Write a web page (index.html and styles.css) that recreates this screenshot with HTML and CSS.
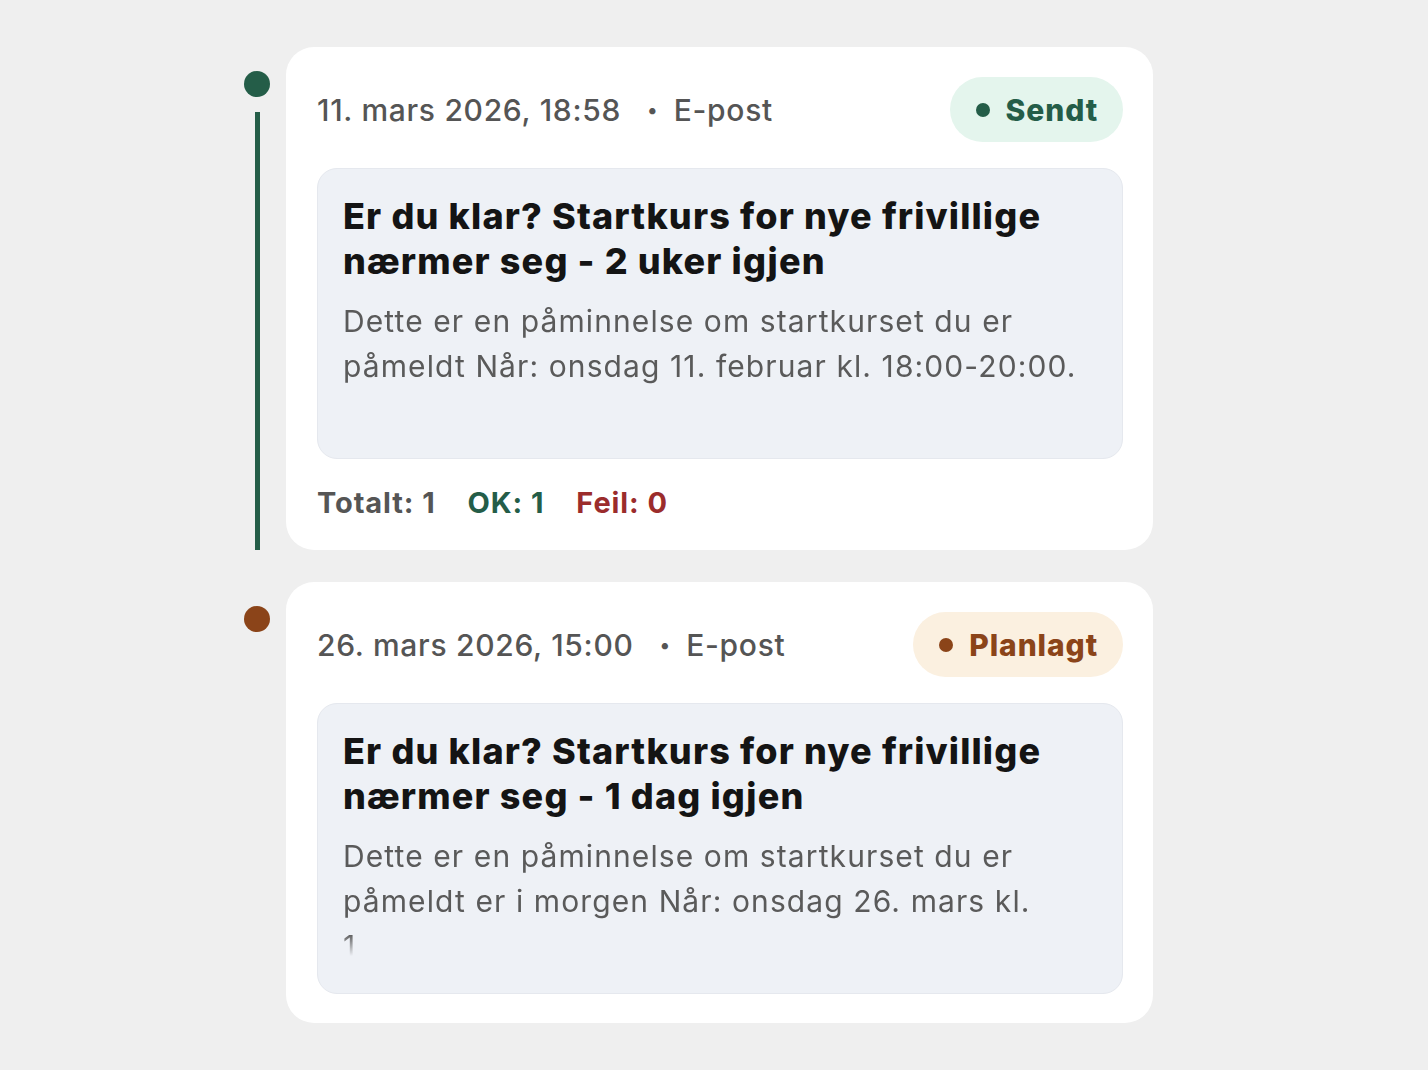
FILE: index.html
```html
<!DOCTYPE html>
<html lang="no">
<head>
<meta charset="utf-8">
<title>Utsendelser</title>
<link rel="stylesheet" href="styles.css">
</head>
<body>
<div class="timeline">
  <div class="item">
    <div class="rail">
      <span class="dot dot-sent"></span>
      <span class="line"></span>
    </div>
    <div class="card">
      <div class="card-head">
        <div class="meta">
          <span>11. mars 2026, 18:58</span>
          <span class="sep">•</span>
          <span>E-post</span>
        </div>
        <span class="badge badge-sent"><span class="badge-dot"></span>Sendt</span>
      </div>
      <div class="message">
        <h2 class="title">Er du klar? Startkurs for nye frivillige nærmer seg - 2 uker igjen</h2>
        <p class="body">Dette er en påminnelse om startkurset du er påmeldt Når: onsdag 11. februar kl. 18:00-20:00.</p>
      </div>
      <div class="stats">
        <span class="stat-total">Totalt: 1</span>
        <span class="stat-ok">OK: 1</span>
        <span class="stat-fail">Feil: 0</span>
      </div>
    </div>
  </div>
  <div class="item">
    <div class="rail">
      <span class="dot dot-planned"></span>
    </div>
    <div class="card">
      <div class="card-head">
        <div class="meta">
          <span>26. mars 2026, 15:00</span>
          <span class="sep">•</span>
          <span>E-post</span>
        </div>
        <span class="badge badge-planned"><span class="badge-dot"></span>Planlagt</span>
      </div>
      <div class="message">
        <h2 class="title">Er du klar? Startkurs for nye frivillige nærmer seg - 1 dag igjen</h2>
        <p class="body">Dette er en påminnelse om startkurset du er påmeldt er i morgen Når: onsdag 26. mars kl.<br>1</p>
      </div>
    </div>
  </div>
</div>
</body>
</html>
```

FILE: styles.css
```css
* { box-sizing: border-box; }
html, body {
  margin: 0;
  padding: 0;
  background: #efefef;
  font-family: Inter, "Noto Sans", "Liberation Sans", sans-serif;
}
.timeline {
  width: 909px;
  margin: 47px 0 0 244px;
  display: flex;
  flex-direction: column;
  gap: 32px;
}
.item {
  display: flex;
  align-items: stretch;
}
.rail {
  width: 42px;
  flex: 0 0 42px;
  display: flex;
  flex-direction: column;
}
.dot {
  width: 26px;
  height: 26px;
  border-radius: 50%;
  margin-top: 24px;
}
.dot-sent { background: #245d48; }
.dot-planned { background: #8b4419; }
.line {
  flex: 1;
  width: 5px;
  margin: 15px 0 0 11px;
  background: #245d48;
}
.card {
  flex: 1;
  background: #ffffff;
  border-radius: 28px;
  padding: 30px 30px 29px 31px;
  display: flex;
  flex-direction: column;
  gap: 26px;
}
.card-head {
  display: flex;
  align-items: center;
  justify-content: space-between;
  height: 65px;
}
.meta {
  display: flex;
  align-items: center;
  font-size: 30px;
  letter-spacing: 0.7px;
  color: #555555;
  font-weight: 500;
}
.sep {
  font-size: 20px;
  letter-spacing: 0;
  margin: 0 16px 0 26px;
}
.badge {
  display: inline-flex;
  align-items: center;
  gap: 16px;
  height: 65px;
  padding: 0 25px 0 26px;
  border-radius: 33px;
  font-size: 30px;
  letter-spacing: 0.9px;
  font-weight: 800;
}
.badge-dot {
  width: 14px;
  height: 14px;
  border-radius: 50%;
  background: currentColor;
}
.badge-sent { background: #e4f5ed; color: #245d48; }
.badge-planned { background: #fbf0e0; color: #8b4419; }
.message {
  height: 291px;
  overflow: hidden;
  background: #eef1f6;
  border: 1px solid #e5e8ee;
  border-radius: 20px;
  padding: 25px 25px;
}
.title {
  margin: 0;
  font-size: 36px;
  line-height: 45px;
  letter-spacing: 1.15px;
  font-weight: 800;
  color: #141414;
}
.body {
  margin: 15px 0 0;
  font-size: 30px;
  line-height: 45px;
  letter-spacing: 1.1px;
  color: #5a5a5a;
  max-height: 135px;
  overflow: hidden;
  -webkit-mask-image: linear-gradient(to bottom, #000 100px, transparent 122px);
  mask-image: linear-gradient(to bottom, #000 100px, transparent 122px);
}
.stats {
  display: flex;
  gap: 32px;
  font-size: 29px;
  line-height: 36px;
  letter-spacing: 0.9px;
  font-weight: 700;
}
.stat-total { color: #555555; }
.stat-ok { color: #245d48; }
.stat-fail { color: #9b2c2c; }
```
